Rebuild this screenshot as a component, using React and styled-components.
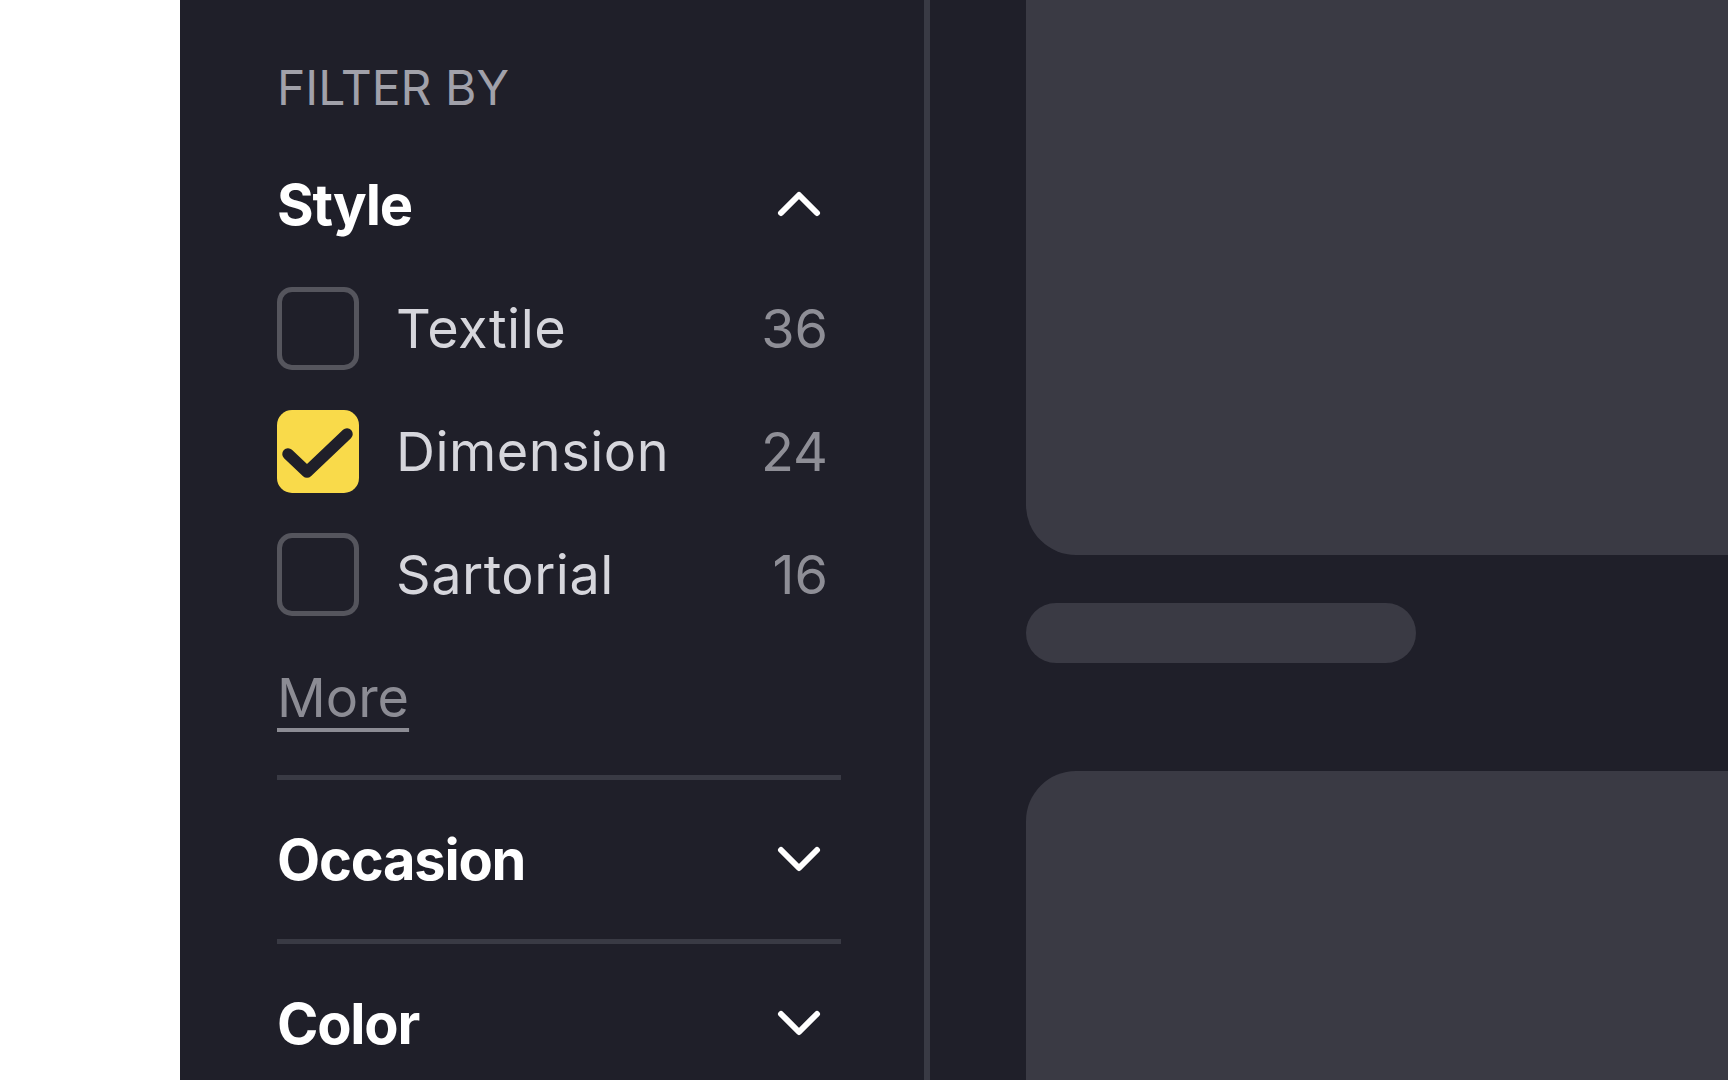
import React from 'react';
import styled, { createGlobalStyle } from 'styled-components';

const GlobalStyle = createGlobalStyle`
    html, body {
        margin:0;
        padding:0;
        background-color:#FFFFFF;
        font-family:Inter, "Noto Sans", "Liberation Sans", sans-serif;
    }
    * { box-sizing:border-box; }
`;

const Page = styled.div`
    display:flex;
    height:100vh;
    overflow:hidden;
    background-color:#FFFFFF;
`;

const Gutter = styled.div`
    flex:0 0 180px;
`;

const Sidebar = styled.aside`
    flex:0 0 750px;
    display:flex;
    flex-direction:column;
    padding:0 83px 0 97px;
    background-color:#1F1F29;
    border-right:6px solid #393A44;
`;

const Title = styled.h2`
    margin:0;
    padding:59px 0 8px 0;
    font-size:48px;
    line-height:58px;
    font-weight:400;
    color:#A1A1AA;
`;

const Section = styled.section`
    padding:46px 0 45px 0;
    border-bottom:5px solid #393A44;
`;

const SectionHead = styled.div`
    display:flex;
    align-items:center;
    justify-content:space-between;
    height:68px;
    font-size:56px;
    line-height:68px;
    font-weight:700;
    letter-spacing:-1.2px;
    color:#FFFFFF;

    svg{
        margin-right:20px;
        flex:none;
    }
`;

const Options = styled.ul`
    list-style:none;
    margin:48px 0 0 0;
    padding:0;
    display:flex;
    flex-direction:column;
    gap:40px;
`;

const Option = styled.li`
    display:flex;
    align-items:center;
    height:83px;
`;

const Box = styled.span`
    flex:none;
    display:flex;
    align-items:center;
    justify-content:center;
    width:82px;
    height:83px;
    border-radius:15px;
    border:${p => p.$checked ? 'none' : '5.5px solid #55555D'};
    background-color:${p => p.$checked ? '#F9DA4A' : 'transparent'};
`;

const Label = styled.span`
    flex:1;
    margin-left:37px;
    font-size:54px;
    line-height:65px;
    letter-spacing:0.5px;
    color:#D6D6DC;
`;

const Count = styled.span`
    padding-right:13px;
    font-size:54px;
    line-height:65px;
    color:#8E8E96;
`;

const More = styled.a`
    display:inline-block;
    align-self:flex-start;
    margin-top:49px;
    font-size:54px;
    line-height:65px;
    color:#8C8C94;
    text-decoration:underline;
    text-decoration-thickness:4px;
    text-underline-offset:11px;
    cursor:pointer;
`;

const StyleBody = styled.div`
    display:flex;
    flex-direction:column;
`;

const Main = styled.main`
    flex:1;
    display:flex;
    flex-direction:column;
    align-items:flex-start;
    padding-left:96px;
    background-color:#1F1F29;
    overflow:hidden;
`;

const Card = styled.div`
    flex:none;
    width:800px;
    height:${p => p.$h}px;
    margin-top:${p => p.$top}px;
    border-radius:50px;
    background-color:#3A3A44;
`;

const Pill = styled.div`
    flex:none;
    width:390px;
    height:60px;
    margin-top:48px;
    border-radius:30px;
    background-color:#3A3A44;
`;

const Chevron = ({ up }) => (
    <svg width="44" height="28" viewBox="0 0 44 28" fill="none"
        stroke="#FFFFFF" strokeWidth="6" strokeLinecap="round" strokeLinejoin="round">
        <path d={up ? 'M4 22 L22 4 L40 22' : 'M4 4 L22 22 L40 4'} />
    </svg>
);

const Check = () => (
    <svg width="82" height="83" viewBox="0 0 82 83" fill="none"
        stroke="#1F1F29" strokeWidth="11.5" strokeLinecap="round" strokeLinejoin="round">
        <path d="M11 44 L30 62 L70 24" />
    </svg>
);

const styles = [
    { name: 'Textile', count: 36, checked: false },
    { name: 'Dimension', count: 24, checked: true },
    { name: 'Sartorial', count: 16, checked: false },
];

const App = () => {
    return <Page>
        <GlobalStyle />
        <Gutter />
        <Sidebar>
            <Title>FILTER BY</Title>
            <Section>
                <SectionHead>
                    Style
                    <Chevron up />
                </SectionHead>
                <StyleBody>
                    <Options>
                        {styles.map(s => (
                            <Option key={s.name}>
                                <Box $checked={s.checked}>{s.checked && <Check />}</Box>
                                <Label>{s.name}</Label>
                                <Count>{s.count}</Count>
                            </Option>
                        ))}
                    </Options>
                    <More>More</More>
                </StyleBody>
            </Section>
            <Section>
                <SectionHead>
                    Occasion
                    <Chevron />
                </SectionHead>
            </Section>
            <Section>
                <SectionHead>
                    Color
                    <Chevron />
                </SectionHead>
            </Section>
        </Sidebar>
        <Main>
            <Card $h={700} $top={-145} />
            <Pill />
            <Card $h={600} $top={108} />
        </Main>
    </Page>
}

export default App;
